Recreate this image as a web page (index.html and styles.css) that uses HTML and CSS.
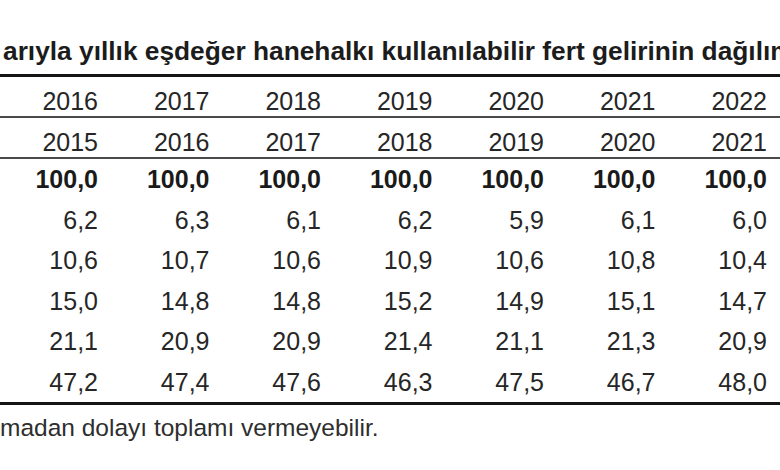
FILE: index.html
```html
<!DOCTYPE html>
<html lang="tr">
<head>
<meta charset="utf-8">
<title>Gelir dağılımı</title>
<link rel="stylesheet" href="styles.css">
</head>
<body>
<div class="page">
  <div class="title">arıyla yıllık eşdeğer hanehalkı kullanılabilir fert gelirinin dağılımı</div>
  <div class="table">
    <div class="row head first">
      <span>2016</span><span>2017</span><span>2018</span><span>2019</span><span>2020</span><span>2021</span><span>2022</span>
    </div>
    <div class="row head">
      <span>2015</span><span>2016</span><span>2017</span><span>2018</span><span>2019</span><span>2020</span><span>2021</span>
    </div>
    <div class="row data total">
      <span>100,0</span><span>100,0</span><span>100,0</span><span>100,0</span><span>100,0</span><span>100,0</span><span>100,0</span>
    </div>
    <div class="row data">
      <span>6,2</span><span>6,3</span><span>6,1</span><span>6,2</span><span>5,9</span><span>6,1</span><span>6,0</span>
    </div>
    <div class="row data">
      <span>10,6</span><span>10,7</span><span>10,6</span><span>10,9</span><span>10,6</span><span>10,8</span><span>10,4</span>
    </div>
    <div class="row data">
      <span>15,0</span><span>14,8</span><span>14,8</span><span>15,2</span><span>14,9</span><span>15,1</span><span>14,7</span>
    </div>
    <div class="row data">
      <span>21,1</span><span>20,9</span><span>20,9</span><span>21,4</span><span>21,1</span><span>21,3</span><span>20,9</span>
    </div>
    <div class="row data last">
      <span>47,2</span><span>47,4</span><span>47,6</span><span>46,3</span><span>47,5</span><span>46,7</span><span>48,0</span>
    </div>
  </div>
  <div class="note">madan dolayı toplamı vermeyebilir.</div>
</div>
</body>
</html>
```

FILE: styles.css
```css
html, body {
  margin: 0;
  padding: 0;
  background: #ffffff;
}

.page {
  width: 780px;
  height: 470px;
  overflow: hidden;
  font-family: "Liberation Sans", Arial, sans-serif;
  color: #262626;
}

.title {
  margin-top: 37px;
  height: 28px;
  line-height: 28px;
  padding-left: 3px;
  font-size: 26.3px;
  font-weight: bold;
  color: #1c1c1c;
  white-space: nowrap;
  overflow: hidden;
  margin-bottom: 9px;
}

.table {
  border-top: 3px solid #151515;
  border-bottom: 3px solid #151515;
}

.row {
  display: grid;
  grid-template-columns: 98px repeat(6, 111.5px);
  font-size: 25px;
}

.row span {
  text-align: right;
}

.head {
  height: 39px;
  line-height: 30px;
  align-items: end;
  border-bottom: 2px solid #4a4a4a;
}

.data {
  height: 40.5px;
  line-height: 40.5px;
}

.total {
  font-weight: bold;
  color: #1a1a1a;
}

.note {
  margin-top: 9px;
  font-size: 24.5px;
  line-height: 28px;
  color: #2e2e2e;
  white-space: nowrap;
}
```
